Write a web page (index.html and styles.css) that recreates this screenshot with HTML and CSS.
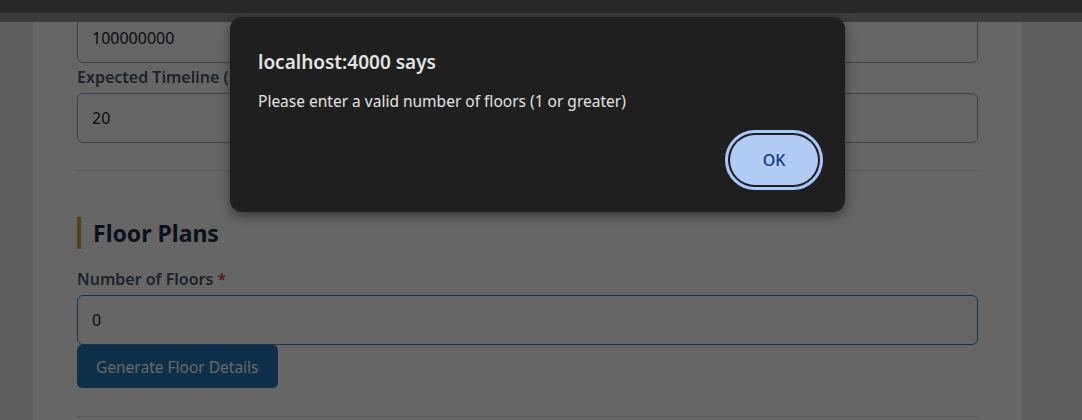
FILE: index.html
```html
<!DOCTYPE html>
<html lang="en">
<head>
<meta charset="utf-8">
<title>Project Form</title>
<link rel="stylesheet" href="styles.css">
</head>
<body>
<div class="chrome">
  <div class="chrome-top"></div>
  <div class="chrome-bottom"></div>
</div>
<div class="viewport">
  <div class="page">
    <div class="card">
      <div class="scroll">
        <div class="field">
          <input class="input" type="text" value="100000000">
        </div>
        <div class="field">
          <label class="label">Expected Timeline (months)</label>
          <input class="input" type="text" value="20">
        </div>
        <hr class="divider first-divider">
        <section class="section">
          <h2 class="section-title">Floor Plans</h2>
          <div class="field">
            <label class="label">Number of Floors <span class="req">*</span></label>
            <input class="input focused" type="text" value="0">
            <button class="btn-generate" type="button">Generate Floor Details</button>
          </div>
        </section>
        <hr class="divider second-divider">
      </div>
    </div>
  </div>
  <div class="overlay"></div>
</div>

<div class="dialog" role="alertdialog">
  <div class="dialog-title">localhost:4000 says</div>
  <div class="dialog-msg">Please enter a valid number of floors (1 or greater)</div>
  <div class="dialog-actions">
    <button class="dialog-ok" type="button">OK</button>
  </div>
</div>
</body>
</html>
```

FILE: styles.css
```css
* { box-sizing: border-box; }
html, body {
  margin: 0;
  padding: 0;
  width: 1082px;
  height: 420px;
  overflow: hidden;
  background: #e8ebf0;
  font-family: "Noto Sans", "Open Sans", Arial, sans-serif;
}
.chrome { height: 22px; display: flex; flex-direction: column; }
.chrome-top { height: 13px; background: #282828; }
.chrome-bottom { height: 9px; background: #3b3b3b; }

.viewport {
  position: relative;
  height: 398px;
  overflow: hidden;
}
.page {
  padding-left: 33px;
  height: 100%;
}
.card {
  width: 989px;
  height: 100%;
  background: #ffffff;
  padding: 0 44px;
  overflow: hidden;
}
.scroll { margin-top: -9px; }

.field { display: flex; flex-direction: column; }
.label {
  font-size: 16px;
  line-height: 24px;
  font-weight: 600;
  color: #4a5568;
  margin: 2px 0 4px;
}
.req { color: #e53e3e; }
.input {
  height: 50px;
  width: 100%;
  border: 1px solid #94a3b8;
  border-radius: 6px;
  padding: 0 14px;
  font-family: inherit;
  font-size: 16px;
  color: #1a202c;
  background: #ffffff;
}
.input.focused { border-color: #3b82c4; }

.divider {
  border: 0;
  border-top: 1px solid #d6dbe3;
  margin: 27px 0 0;
}
.section { padding-top: 46px; }
.section-title {
  margin: 0 0 16px;
  border-left: 4px solid #d4a72c;
  padding-left: 12px;
  height: 32px;
  line-height: 32px;
  font-size: 23px;
  font-weight: 700;
  color: #1e2d45;
}
.btn-generate {
  align-self: flex-start;
  height: 43px;
  padding: 0 19px;
  border: 0;
  border-radius: 5px;
  background: #2476ba;
  color: #ffffff;
  font-family: inherit;
  font-size: 15.5px;
}
.second-divider { margin-top: 28px; }

.overlay {
  position: absolute;
  inset: 0;
  background: rgba(0, 0, 0, 0.6);
}

.dialog {
  position: absolute;
  left: 230px;
  top: 17px;
  width: 615px;
  height: 195px;
  background: #1f1f1f;
  border-radius: 12px;
  box-shadow: 0 4px 12px rgba(0, 0, 0, 0.45);
  padding: 32px 27px 27px 28px;
  font-family: "Noto Sans", "Open Sans", Arial, sans-serif;
  color: #e3e3e3;
  display: flex;
  flex-direction: column;
}
.dialog-title {
  font-size: 19px;
  line-height: 26px;
  font-weight: 600;
}
.dialog-msg {
  margin-top: 16px;
  font-size: 15.5px;
  line-height: 20px;
}
.dialog-actions {
  margin-top: auto;
  display: flex;
  justify-content: flex-end;
}
.dialog-ok {
  width: 88px;
  height: 50px;
  border: 0;
  border-radius: 25px;
  background: #b1cbf5;
  color: #0b3a7a;
  font-family: inherit;
  font-size: 16px;
  font-weight: 500;
  outline: 3px solid #a8c7fa;
  outline-offset: 2px;
}
```
